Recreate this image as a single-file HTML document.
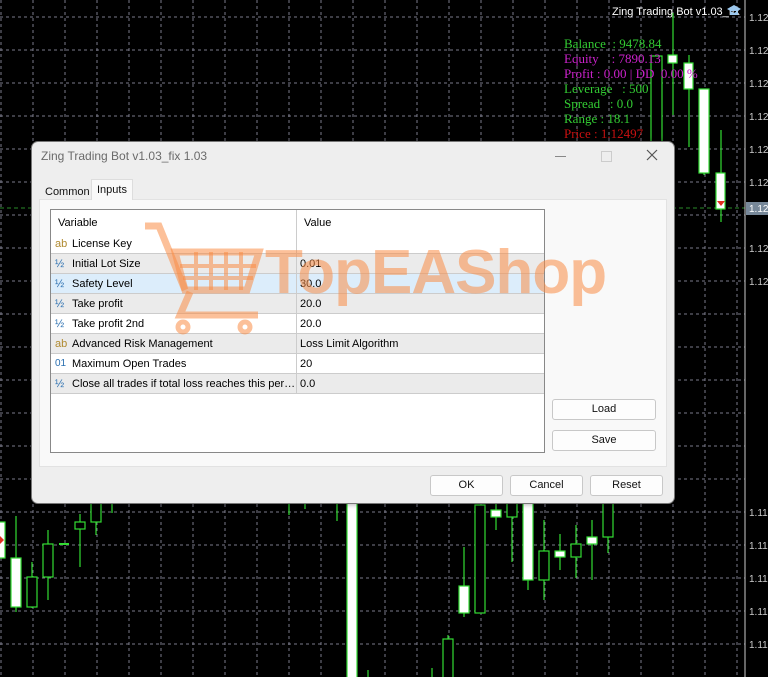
<!DOCTYPE html>
<html><head><meta charset="utf-8"><style>
body{margin:0;width:768px;height:677px;background:#000;position:relative;overflow:hidden;font-family:"Liberation Sans",sans-serif}
svg{position:absolute;left:0;top:0}
.info{position:absolute;left:564px;font-family:"Liberation Serif",serif;font-size:13px;line-height:15px;white-space:pre}
.dlg{position:absolute;left:31px;top:141px;width:642px;height:361px;background:#eeeeee;border:1px solid #777;border-radius:7px;box-shadow:0 0 6px rgba(0,0,0,.4);overflow:hidden}
.title{position:absolute;left:9px;top:7px;font-size:12px;color:#6a6a6a}
.panel{position:absolute;left:7px;top:57px;width:626px;height:266px;background:#f9f9f9;border:1px solid #e2e2e2}
.tab{position:absolute;top:38px;height:19px;font-size:11px;line-height:20px;padding:0 5px;color:#111}
.tbl{position:absolute;left:18px;top:67px;width:493px;height:242px;background:#fff;border:1px solid #888}
.row{position:absolute;left:0;width:493px;height:19px;border-bottom:1px solid #ccc;font-size:11px;line-height:20px}
.row span{position:absolute}
.n{left:21px}.v{left:249px}
.ic{left:4px;font-size:11px}
.ab{color:#b08a30}.hf{color:#2a6fb0}
.btn{position:absolute;height:19px;background:#fdfdfd;border:1px solid #c8c8c8;border-radius:3px;font-size:11px;text-align:center;line-height:19px;color:#111}
.wm{position:absolute;left:233px;top:95px;font-size:62px;font-weight:bold;color:rgba(250,140,70,.55);letter-spacing:-1px;white-space:nowrap}
</style></head><body>
<svg width="768" height="677">
<g stroke="#7a7a8a" stroke-width="1" stroke-dasharray="3,3">
<line x1="1" y1="0" x2="1" y2="677"/><line x1="33" y1="0" x2="33" y2="677"/><line x1="65" y1="0" x2="65" y2="677"/><line x1="97" y1="0" x2="97" y2="677"/><line x1="129" y1="0" x2="129" y2="677"/><line x1="161" y1="0" x2="161" y2="677"/><line x1="193" y1="0" x2="193" y2="677"/><line x1="225" y1="0" x2="225" y2="677"/><line x1="257" y1="0" x2="257" y2="677"/><line x1="289" y1="0" x2="289" y2="677"/><line x1="321" y1="0" x2="321" y2="677"/><line x1="353" y1="0" x2="353" y2="677"/><line x1="385" y1="0" x2="385" y2="677"/><line x1="417" y1="0" x2="417" y2="677"/><line x1="449" y1="0" x2="449" y2="677"/><line x1="481" y1="0" x2="481" y2="677"/><line x1="513" y1="0" x2="513" y2="677"/><line x1="545" y1="0" x2="545" y2="677"/><line x1="577" y1="0" x2="577" y2="677"/><line x1="609" y1="0" x2="609" y2="677"/><line x1="641" y1="0" x2="641" y2="677"/><line x1="673" y1="0" x2="673" y2="677"/><line x1="705" y1="0" x2="705" y2="677"/><line x1="737" y1="0" x2="737" y2="677"/>
<line x1="0" y1="17" x2="745" y2="17"/><line x1="0" y1="50" x2="745" y2="50"/><line x1="0" y1="83" x2="745" y2="83"/><line x1="0" y1="116" x2="745" y2="116"/><line x1="0" y1="149" x2="745" y2="149"/><line x1="0" y1="182" x2="745" y2="182"/><line x1="0" y1="215" x2="745" y2="215"/><line x1="0" y1="248" x2="745" y2="248"/><line x1="0" y1="281" x2="745" y2="281"/><line x1="0" y1="314" x2="745" y2="314"/><line x1="0" y1="347" x2="745" y2="347"/><line x1="0" y1="380" x2="745" y2="380"/><line x1="0" y1="413" x2="745" y2="413"/><line x1="0" y1="446" x2="745" y2="446"/><line x1="0" y1="479" x2="745" y2="479"/><line x1="0" y1="512" x2="745" y2="512"/><line x1="0" y1="545" x2="745" y2="545"/><line x1="0" y1="578" x2="745" y2="578"/><line x1="0" y1="611" x2="745" y2="611"/><line x1="0" y1="644" x2="745" y2="644"/>
</g>
<line x1="0" y1="208" x2="745" y2="208" stroke="#2a8a2a" stroke-dasharray="4,3"/>
<line x1="745" y1="0" x2="745" y2="677" stroke="#ccc"/>
<g fill="#ccc" font-size="10" font-family="Liberation Sans">
<text x="749" y="21">1.12</text><text x="749" y="54">1.12</text><text x="749" y="87">1.12</text><text x="749" y="120">1.12</text><text x="749" y="153">1.12</text><text x="749" y="186">1.12</text>
<text x="749" y="252">1.12</text><text x="749" y="285">1.12</text><text x="749" y="516">1.11</text><text x="749" y="549">1.11</text><text x="749" y="582">1.11</text><text x="749" y="615">1.11</text><text x="749" y="648">1.11</text>
</g>
<rect x="746" y="202" width="22" height="13" fill="#778899"/><text x="749" y="212" fill="#fff" font-size="10" font-family="Liberation Sans">1.12</text>
<g stroke="#33dd33" stroke-width="1.2">
<line x1="673" y1="13" x2="673" y2="115"/><line x1="689" y1="55" x2="689" y2="147"/><line x1="721" y1="130" x2="721" y2="222"/><line x1="704" y1="89" x2="704" y2="175"/>
<rect x="651" y="56" width="11" height="90" fill="#000"/>
<rect x="668" y="55" width="9" height="8" fill="#fff"/><rect x="684" y="63" width="9" height="26" fill="#fff"/><rect x="699" y="89" width="10" height="84" fill="#fff"/><rect x="716" y="173" width="9" height="36" fill="#fff"/>
<line x1="16" y1="516" x2="16" y2="612"/><line x1="32" y1="562" x2="32" y2="608"/><line x1="48" y1="530" x2="48" y2="600"/><line x1="80" y1="514" x2="80" y2="567"/><line x1="96" y1="490" x2="96" y2="535"/><line x1="112" y1="490" x2="112" y2="513"/><line x1="128" y1="490" x2="128" y2="503"/><line x1="289" y1="490" x2="289" y2="515"/><line x1="305" y1="490" x2="305" y2="509"/><line x1="337" y1="490" x2="337" y2="521"/><line x1="368" y1="670" x2="368" y2="677"/><line x1="432" y1="668" x2="432" y2="677"/><line x1="448" y1="635" x2="448" y2="677"/><line x1="464" y1="547" x2="464" y2="617"/><line x1="496" y1="503" x2="496" y2="530"/><line x1="512" y1="490" x2="512" y2="562"/><line x1="528" y1="490" x2="528" y2="590"/><line x1="544" y1="520" x2="544" y2="600"/><line x1="560" y1="534" x2="560" y2="570"/><line x1="576" y1="525" x2="576" y2="578"/><line x1="592" y1="520" x2="592" y2="580"/><line x1="608" y1="490" x2="608" y2="553"/>
<rect x="-2" y="522" width="7" height="36" fill="#fff"/><rect x="11" y="558" width="10" height="49" fill="#fff"/><rect x="27" y="577" width="10" height="30" fill="#000"/><rect x="43" y="544" width="10" height="33" fill="#000"/><line x1="59" y1="544" x2="69" y2="544" stroke-width="2"/><rect x="75" y="522" width="10" height="7" fill="#000"/><rect x="91" y="490" width="10" height="32" fill="#000"/>
<rect x="347" y="490" width="10" height="190" fill="#fff"/><rect x="443" y="639" width="10" height="40" fill="#000"/><rect x="459" y="586" width="10" height="27" fill="#fff"/><rect x="475" y="505" width="10" height="108" fill="#000"/><rect x="491" y="510" width="10" height="7" fill="#fff"/><rect x="507" y="490" width="10" height="27" fill="#000"/><rect x="523" y="490" width="10" height="90" fill="#fff"/><rect x="539" y="551" width="10" height="29" fill="#000"/><rect x="555" y="551" width="10" height="6" fill="#fff"/><rect x="571" y="544" width="10" height="13" fill="#000"/><rect x="587" y="537" width="10" height="7" fill="#fff"/><rect x="603" y="490" width="10" height="47" fill="#000"/>
</g>
<path d="M717 201h8l-4 5z" fill="#e03020"/><path d="M0 536l4 4-4 4z" fill="#e03020"/>
<text x="612" y="15" fill="#fff" font-size="11" font-family="Liberation Sans">Zing Trading Bot v1.03_fix</text>
<path d="M727 9l7-4 7 4-7 4z M730 11v4h8v-4" fill="#9cc8ee"/>
</svg>
<div class="info" style="top:36px;color:#33cc33">Balance  : 9478.84</div>
<div class="info" style="top:51px;color:#cc22cc">Equity    : 7890.13</div>
<div class="info" style="top:66px;color:#cc22cc">Profit : 0.00 | DD  0.00 %</div>
<div class="info" style="top:81px;color:#33cc33">Leverage   : 500</div>
<div class="info" style="top:96px;color:#33cc33">Spread   : 0.0</div>
<div class="info" style="top:111px;color:#33cc33">Range : 18.1</div>
<div class="info" style="top:126px;color:#cc1111">Price : 1.12497</div>

<div class="dlg">
<div class="title">Zing Trading Bot v1.03_fix 1.03</div>
<div style="position:absolute;left:523px;top:14px;width:11px;height:1px;background:#888"></div>
<div style="position:absolute;left:569px;top:9px;width:9px;height:9px;border:1px solid #ccc"></div>
<svg style="left:614px;top:7px" width="12" height="12"><path d="M1 1L11 11M11 1L1 11" stroke="#555" stroke-width="1.2"/></svg>
<div class="panel"></div>
<div class="tab" style="left:8px;top:40px">Common</div>
<div class="tab" style="left:59px;top:37px;height:20px;background:#f9f9f9;border:1px solid #ddd;border-bottom:none">Inputs</div>
<div class="tbl">
<div class="row" style="top:0;height:24px;line-height:26px;border-bottom:none"><span style="left:7px">Variable</span><span class="v" style="left:253px">Value</span></div>
<div class="row" style="top:24px"><span class="ic ab">ab</span><span class="n">License Key</span></div>
<div class="row" style="top:44px;background:#ebebeb"><span class="ic hf">½</span><span class="n">Initial Lot Size</span><span class="v">0.01</span></div>
<div class="row" style="top:64px;background:#dcedfb"><span class="ic hf">½</span><span class="n">Safety Level</span><span class="v">30.0</span></div>
<div class="row" style="top:84px;background:#ebebeb"><span class="ic hf">½</span><span class="n">Take profit</span><span class="v">20.0</span></div>
<div class="row" style="top:104px"><span class="ic hf">½</span><span class="n">Take profit 2nd</span><span class="v">20.0</span></div>
<div class="row" style="top:124px;background:#ebebeb"><span class="ic ab">ab</span><span class="n">Advanced Risk Management</span><span class="v">Loss Limit Algorithm</span></div>
<div class="row" style="top:144px"><span class="ic hf" style="font-size:10px">01</span><span class="n">Maximum  Open Trades</span><span class="v">20</span></div>
<div class="row" style="top:164px;background:#ebebeb"><span class="ic hf">½</span><span class="n">Close all trades if total loss reaches this per…</span><span class="v">0.0</span></div>
<div style="position:absolute;left:245px;top:0;width:1px;height:184px;background:#ccc"></div>
</div>
<div class="btn" style="left:520px;top:257px;width:102px">Load</div>
<div class="btn" style="left:520px;top:288px;width:102px">Save</div>
<div class="btn" style="left:398px;top:333px;width:71px">OK</div>
<div class="btn" style="left:478px;top:333px;width:71px">Cancel</div>
<div class="btn" style="left:558px;top:333px;width:71px">Reset</div>
<div class="wm">TopEAShop</div>
</div>
<svg width="768" height="677" style="pointer-events:none">
<g fill="none" stroke="rgba(250,140,70,.55)" stroke-width="7">
<path d="M145 226h14l26 64"/>
<path d="M175 252h84l-12 38h-62z"/>
<path d="M190 292l-10 23h78"/>
</g>
<g fill="none" stroke="rgba(250,140,70,.55)" stroke-width="4">
<path d="M180 266h76M183 278h70M196 252v38M211 252v38M226 252v38M241 252v38"/>
</g>
<g fill="none" stroke="rgba(250,140,70,.55)" stroke-width="5"><circle cx="183" cy="327" r="5"/><circle cx="245" cy="327" r="5"/></g>
</svg>
</body></html>
